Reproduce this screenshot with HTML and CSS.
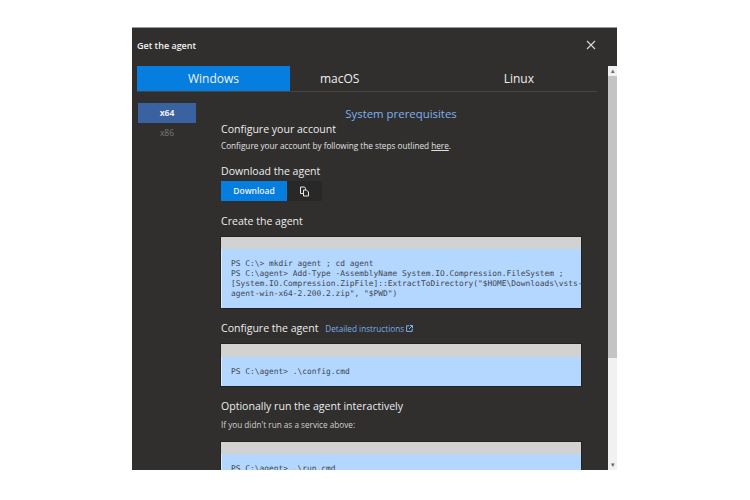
FILE: index.html
```html
<!DOCTYPE html>
<html lang="en">
<head>
<meta charset="utf-8">
<title>Get the agent</title>
<link rel="stylesheet" href="styles.css">
</head>
<body>
<div class="dialog">
  <header class="dialog-head">
    <span class="dialog-title">Get the agent</span>
    <svg class="close" width="10" height="10" viewBox="0 0 10 10"><path d="M1 1l8 8M9 1l-8 8" stroke="#d8d8d8" stroke-width="1.1" fill="none"/></svg>
  </header>
  <div class="dialog-main">
    <div class="dialog-scroll">
      <nav class="tabs">
        <span class="tab tab-active">Windows</span>
        <span class="tab tab-mac">macOS</span>
        <span class="tab tab-linux">Linux</span>
      </nav>
      <div class="columns">
        <aside class="arch">
          <span class="arch-item arch-active">x64</span>
          <span class="arch-item">x86</span>
        </aside>
        <main class="content">
          <a class="prereq">System prerequisites</a>
          <h3 class="h-account">Configure your account</h3>
          <p class="note">Configure your account by following the steps outlined <u>here</u>.</p>
          <h3 class="h-download">Download the agent</h3>
          <div class="actions">
            <span class="btn-download">Download</span>
            <span class="btn-copy">
              <svg width="11" height="11" viewBox="0 0 11 11" fill="none" stroke="#e6e6e6" stroke-width="1"><path d="M1.5 1h4l1 1.5v5h-5z"/><path d="M4.5 4h3l2 2v4h-5z" fill="#2a2a2a"/></svg>
            </span>
          </div>
          <h3 class="h-create">Create the agent</h3>
          <div class="code code-create">
            <div class="code-bar"></div>
            <pre class="code-text">PS C:\&gt; mkdir agent ; cd agent
PS C:\agent&gt; Add-Type -AssemblyName System.IO.Compression.FileSystem ;
[System.IO.Compression.ZipFile]::ExtractToDirectory("$HOME\Downloads\vsts-
agent-win-x64-2.200.2.zip", "$PWD")</pre>
          </div>
          <h3 class="h-config">Configure the agent <a class="details">Detailed instructions
            <svg width="7" height="7" viewBox="0 0 7 7" fill="none" stroke="#7fb2ee" stroke-width="1"><path d="M3 .8H.6v5.6h5.6V4M3.6.5h2.9v2.9M6.4.6L3 4"/></svg></a></h3>
          <div class="code code-config">
            <div class="code-bar"></div>
            <pre class="code-text">PS C:\agent&gt; .\config.cmd</pre>
          </div>
          <h3 class="h-run">Optionally run the agent interactively</h3>
          <p class="note note-run">If you didn't run as a service above:</p>
          <div class="code">
            <div class="code-bar"></div>
            <pre class="code-text">PS C:\agent&gt; .\run.cmd</pre>
          </div>
        </main>
      </div>
    </div>
    <div class="scrollbar">
      <span class="arrow">▴</span>
      <span class="thumb"></span>
      <span class="arrow">▾</span>
    </div>
  </div>
</div>
</body>
</html>
```
FILE: styles.css
```css
html, body { margin: 0; padding: 0; background: #fff; height: 100%; overflow: hidden; }
body { font-family: "Open Sans", "Noto Sans", sans-serif; color: #e8e8e8; }
.dialog { margin: 28px 0 0 132px; width: 485px; height: 442px; background: #302f2e; display: flex; flex-direction: column; overflow: hidden; box-shadow: 0 -1px 0 #9a9a9a; }
.dialog-head { height: 38px; flex: none; display: flex; align-items: center; justify-content: space-between; padding: 0 21px 0 5px; box-sizing: border-box; }
.dialog-title { font-size: 9px; font-weight: 600; color: #f0f0f0; margin-top: -3px; }
.close { margin-top: -5px; }
.dialog-main { flex: 1; display: flex; min-height: 0; }
.dialog-scroll { flex: 1; min-width: 0; padding: 0 11px 0 5px; overflow: hidden; }
.tabs { display: flex; height: 25px; border-bottom: 1px solid #464544; font-size: 12px; }
.tab { line-height: 25px; color: #eee; }
.tab-active { width: 153px; background: #067ee0; text-align: center; color: #f2f2f2; }
.tab-mac { margin-left: 30px; }
.tab-linux { margin-left: auto; margin-right: 63px; }
.columns { display: flex; padding-top: 11px; }
.arch { width: 84px; padding-left: 1px; flex: none; box-sizing: border-box; display: flex; flex-direction: column; }
.arch-item { width: 58px; height: 20px; line-height: 20px; text-align: center; font-size: 8.5px; color: #7a7a7a; margin-bottom: 0; }
.arch-active { background: #3b62a0; color: #efefef; font-weight: 700; }
.content { width: 360px; flex: none; }
.prereq { display: block; text-align: center; font-size: 11.4px; line-height: 16px; height: 16px; color: #7fb0ee; margin-left: 0; padding-top: 3px; }
h3 { font-weight: 400; font-size: 10.55px; line-height: 15px; margin: 0; color: #ececec; }
.note { font-size: 8.2px; line-height: 12px; margin: 3px 0 0; color: #e0e0e0; }
.h-download { margin-top: 12px; }
.actions { display: flex; height: 20px; margin-top: 2px; }
.btn-download { width: 66px; background: #067ee0; font-size: 8.5px; font-weight: 600; line-height: 20px; text-align: center; color: #e8f2fb; }
.btn-copy { width: 35px; background: #292828; display: flex; align-items: center; justify-content: center; }
.h-create { margin-top: 13px; }
.code { background: #b3d7ff; box-shadow: inset 1px 1px 0 #e2e8ef; outline: 1px solid #232323; }
.code-create { margin-top: 8px; height: 71px; }
.code-config { margin-top: 8px; height: 42px; }
.code-bar { height: 12px; background: #d2d2d2; }
.code-text { margin: 0; padding: 10px 0 0 10px; font-family: "DejaVu Sans Mono", monospace; font-size: 7.9px; line-height: 10px; color: #3f4650; white-space: pre; overflow: hidden; }
.code-config .code-bar { height: 13px; }
.h-config { margin-top: 13px; }
.details { font-size: 8.2px; color: #79abe8; margin-left: 4px; }
.h-run { margin-top: 13px; }
.note-run { margin: 5px 0 11px; color: #d0d0d0; }
.scrollbar { width: 9px; flex: none; background: #f1f1f1; display: flex; flex-direction: column; align-items: stretch; text-align: center; }
.arrow { height: 10px; font-size: 7px; line-height: 10px; color: #666; flex: none; }
.thumb { height: 282px; background: #c4c4c4; flex: none; margin-bottom: auto; }
```
